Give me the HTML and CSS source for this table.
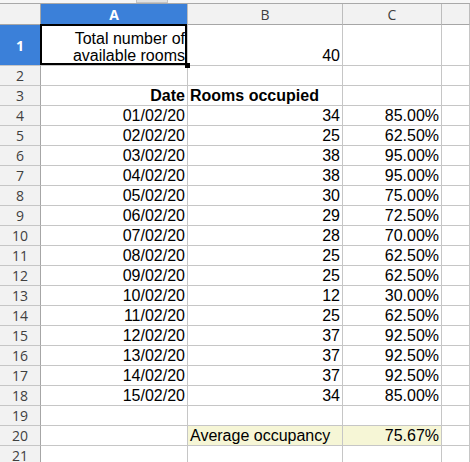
FILE: index.html
```html
<!DOCTYPE html>
<html>
<head>
<meta charset="utf-8">
<link rel="stylesheet" href="styles.css">
</head>
<body>
<div class="topbar"><div class="thumb"></div></div>
<div class="sheet">
  <div class="hd corner"></div>
  <div class="hd col sel">A</div>
  <div class="hd col">B</div>
  <div class="hd col">C</div>
  <div class="hd col"></div>

  <div class="hd row sel">1</div>
  <div class="c r wrap active">Total number of available rooms</div>
  <div class="c r">40</div>
  <div class="c"></div>
  <div class="c"></div>

  <div class="hd row">2</div><div class="c"></div><div class="c"></div><div class="c"></div><div class="c"></div>

  <div class="hd row">3</div>
  <div class="c r b">Date</div>
  <div class="c b">Rooms occupied</div>
  <div class="c"></div><div class="c"></div>

  <div class="hd row">4</div><div class="c r">01/02/20</div><div class="c r">34</div><div class="c r">85.00%</div><div class="c"></div>
  <div class="hd row">5</div><div class="c r">02/02/20</div><div class="c r">25</div><div class="c r">62.50%</div><div class="c"></div>
  <div class="hd row">6</div><div class="c r">03/02/20</div><div class="c r">38</div><div class="c r">95.00%</div><div class="c"></div>
  <div class="hd row">7</div><div class="c r">04/02/20</div><div class="c r">38</div><div class="c r">95.00%</div><div class="c"></div>
  <div class="hd row">8</div><div class="c r">05/02/20</div><div class="c r">30</div><div class="c r">75.00%</div><div class="c"></div>
  <div class="hd row">9</div><div class="c r">06/02/20</div><div class="c r">29</div><div class="c r">72.50%</div><div class="c"></div>
  <div class="hd row">10</div><div class="c r">07/02/20</div><div class="c r">28</div><div class="c r">70.00%</div><div class="c"></div>
  <div class="hd row">11</div><div class="c r">08/02/20</div><div class="c r">25</div><div class="c r">62.50%</div><div class="c"></div>
  <div class="hd row">12</div><div class="c r">09/02/20</div><div class="c r">25</div><div class="c r">62.50%</div><div class="c"></div>
  <div class="hd row">13</div><div class="c r">10/02/20</div><div class="c r">12</div><div class="c r">30.00%</div><div class="c"></div>
  <div class="hd row">14</div><div class="c r">11/02/20</div><div class="c r">25</div><div class="c r">62.50%</div><div class="c"></div>
  <div class="hd row">15</div><div class="c r">12/02/20</div><div class="c r">37</div><div class="c r">92.50%</div><div class="c"></div>
  <div class="hd row">16</div><div class="c r">13/02/20</div><div class="c r">37</div><div class="c r">92.50%</div><div class="c"></div>
  <div class="hd row">17</div><div class="c r">14/02/20</div><div class="c r">37</div><div class="c r">92.50%</div><div class="c"></div>
  <div class="hd row">18</div><div class="c r">15/02/20</div><div class="c r">34</div><div class="c r">85.00%</div><div class="c"></div>

  <div class="hd row">19</div><div class="c"></div><div class="c"></div><div class="c"></div><div class="c"></div>

  <div class="hd row">20</div>
  <div class="c"></div>
  <div class="c hl">Average occupancy</div>
  <div class="c r hl">75.67%</div>
  <div class="c"></div>

  <div class="hd row">21</div><div class="c"></div><div class="c"></div><div class="c"></div><div class="c"></div>
</div>
</body>
</html>
```

FILE: styles.css
```css
html, body {
  margin: 0;
  padding: 0;
  background: #ffffff;
  overflow: hidden;
}

.topbar {
  height: 3px;
  background: #f6f6f6;
  border-bottom: 1px solid #a9a9a9;
  position: relative;
}

.thumb {
  position: absolute;
  left: 136px;
  top: 0;
  width: 30px;
  height: 2px;
  background: #e2e2e2;
  border: 1px solid #c4c4c4;
  border-top: none;
}

.sheet {
  display: grid;
  grid-template-columns: 41px 147px 155px 99px 1fr;
  grid-template-rows: 21px 41px repeat(20, 20px);
  font-family: "Liberation Sans", Arial, sans-serif;
  font-size: 16px;
  color: #000;
}

.c {
  box-sizing: border-box;
  border-right: 1px solid #c6c6c6;
  border-bottom: 1px solid #c6c6c6;
  display: flex;
  align-items: flex-end;
  padding: 0 2px 0 2px;
  line-height: 18px;
  white-space: nowrap;
  min-width: 0;
}

.c.r {
  justify-content: flex-end;
  text-align: right;
}

.c.b {
  font-weight: bold;
}

.c.wrap {
  white-space: normal;
  line-height: 17px;
  padding-bottom: 1px;
}

.c.hl {
  background: #f6f6d6;
}

.active {
  position: relative;
}

.active::after {
  content: "";
  position: absolute;
  left: -1px;
  top: -1px;
  right: 0;
  bottom: 0;
  border: 2px solid #000;
  z-index: 2;
}

.active::before {
  content: "";
  position: absolute;
  right: -3px;
  bottom: -3px;
  width: 5px;
  height: 5px;
  background: #000;
  z-index: 3;
}

.hd {
  box-sizing: border-box;
  background: #f2f2f2;
  color: #3f3f3f;
  font-family: "Open Sans", "Noto Sans", sans-serif;
  font-size: 14px;
  display: flex;
  align-items: center;
  justify-content: center;
  border-right: 1px solid #bdbdbd;
  border-bottom: 1px solid #bdbdbd;
}

.hd.col {
  border-bottom: 1px solid #a6a6a6;
}

.hd.row {
  border-right: 1px solid #a6a6a6;
  border-bottom: 1px solid #c6c6c6;
}

.hd.corner {
  border-right: 1px solid #a6a6a6;
  border-bottom: 1px solid #a6a6a6;
}

.hd.sel {
  background: #3b80d9;
  color: #ffffff;
  font-weight: bold;
}
```
